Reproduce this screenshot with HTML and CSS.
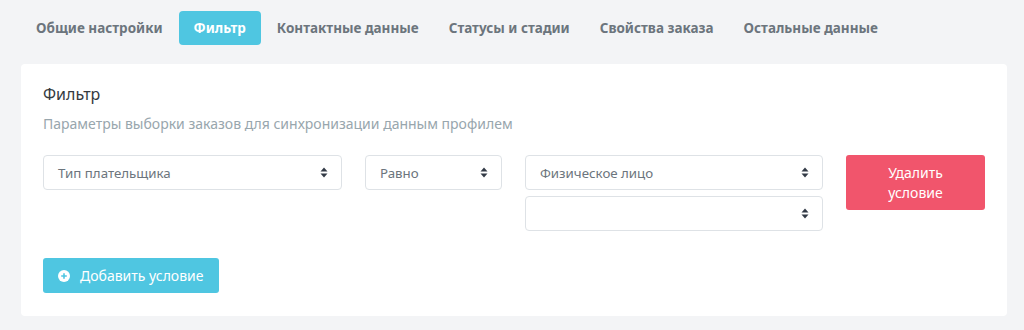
FILE: index.html
```html
<!DOCTYPE html>
<html lang="ru">
<head>
    <meta charset="UTF-8">
    <meta name="viewport" content="width=device-width, initial-scale=1.0">
    <title>Фильтр</title>
    <link rel="stylesheet" href="styles.css">
</head>
<body>
    <div class="page">
        <ul class="tabs">
            <li class="tab">Общие настройки</li>
            <li class="tab active">Фильтр</li>
            <li class="tab">Контактные данные</li>
            <li class="tab">Статусы и стадии</li>
            <li class="tab">Свойства заказа</li>
            <li class="tab">Остальные данные</li>
        </ul>

        <div class="card">
            <h4 class="card-title">Фильтр</h4>
            <p class="card-sub">Параметры выборки заказов для синхронизации данным профилем</p>

            <div class="condition">
                <div class="select">
                    <span>Тип плательщика</span>
                    <svg class="caret" width="8" height="11" viewBox="0 0 8 11"><path d="M4 0.5L7.5 4.5H0.5Z M4 10.5L0.5 6.5H7.5Z" fill="#323a46"/></svg>
                </div>
                <div class="select">
                    <span>Равно</span>
                    <svg class="caret" width="8" height="11" viewBox="0 0 8 11"><path d="M4 0.5L7.5 4.5H0.5Z M4 10.5L0.5 6.5H7.5Z" fill="#323a46"/></svg>
                </div>
                <div class="values">
                    <div class="select">
                        <span>Физическое лицо</span>
                        <svg class="caret" width="8" height="11" viewBox="0 0 8 11"><path d="M4 0.5L7.5 4.5H0.5Z M4 10.5L0.5 6.5H7.5Z" fill="#323a46"/></svg>
                    </div>
                    <div class="select">
                        <span></span>
                        <svg class="caret" width="8" height="11" viewBox="0 0 8 11"><path d="M4 0.5L7.5 4.5H0.5Z M4 10.5L0.5 6.5H7.5Z" fill="#323a46"/></svg>
                    </div>
                </div>
                <button class="btn btn-danger">Удалить<br>условие</button>
            </div>

            <button class="btn btn-info">
                <svg width="12" height="12" viewBox="0 0 12 12"><circle cx="6" cy="6" r="6" fill="#fff"/><path d="M6 3.2V8.8M3.2 6H8.8" stroke="#4fc6e1" stroke-width="1.6"/></svg>
                Добавить условие
            </button>
        </div>
    </div>
</body>
</html>
```

FILE: styles.css
```css
body {
    margin: 0;
    background-color: #f3f4f6;
    font-family: "Noto Sans", Arial, sans-serif;
    color: #6c757d;
}
.page {
    padding: 11px 17px 0 21px;
}
.tabs {
    display: flex;
    list-style: none;
    margin: 0;
    padding: 0;
}
.tab {
    padding: 0 15px;
    height: 34px;
    line-height: 35px;
    font-size: 13.5px;
    font-weight: 700;
    color: #6c757d;
    border-radius: 4px;
}
.tab.active {
    background-color: #4fc6e1;
    color: #fff;
    margin: 0 1px;
}
.card {
    margin-top: 19px;
    background-color: #fff;
    border-radius: 4px;
    padding: 20px 22px 22px 22px;
    height: 210px;
}
.card-title {
    margin: 0;
    font-size: 16px;
    font-weight: 400;
    line-height: 20px;
    color: #343a40;
}
.card-sub {
    margin: 10px 0 0;
    font-size: 14px;
    line-height: 20px;
    color: #98a6ad;
}
.condition {
    display: grid;
    grid-template-columns: 299px 137px 298px 139px;
    column-gap: 23px;
    align-items: start;
    margin-top: 21px;
}
.values {
    display: flex;
    flex-direction: column;
    gap: 6px;
}
.select {
    display: flex;
    align-items: center;
    justify-content: space-between;
    height: 33px;
    padding: 0 13px 0 14px;
    border: 1px solid #dee2e6;
    border-radius: 4px;
    font-size: 13.3px;
    color: #6c757d;
}
.btn {
    border: none;
    border-radius: 3px;
    color: #fff;
    font-family: inherit;
    font-size: 14px;
}
.btn-danger {
    background-color: #f1556c;
    height: 55px;
    line-height: 20px;
}
.btn-info {
    display: flex;
    align-items: center;
    gap: 10px;
    margin-top: 27px;
    height: 35px;
    padding: 0 16px 0 15px;
    background-color: #4fc6e1;
}
```
